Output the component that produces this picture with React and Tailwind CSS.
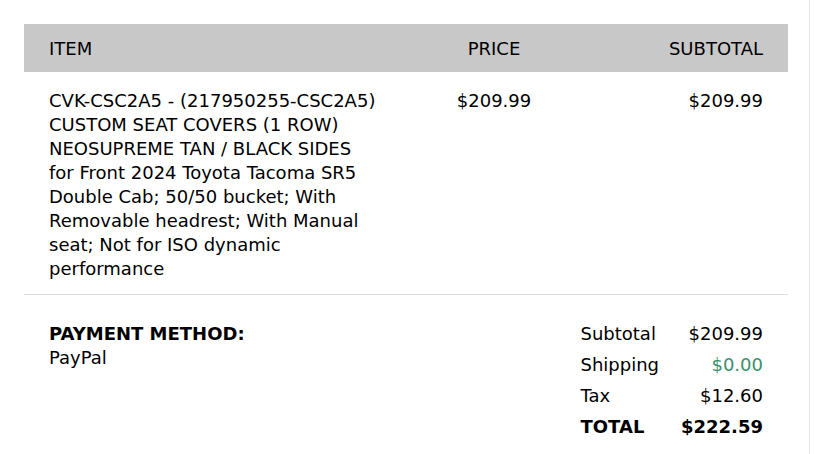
import React from 'react';

const itemLines = [
  'CVK-CSC2A5 - (217950255-CSC2A5)',
  'CUSTOM SEAT COVERS (1 ROW)',
  'NEOSUPREME TAN / BLACK SIDES',
  'for Front 2024 Toyota Tacoma SR5',
  'Double Cab; 50/50 bucket; With',
  'Removable headrest; With Manual',
  'seat; Not for ISO dynamic',
  'performance',
];

const totals = [
  { label: 'Subtotal', value: '$209.99' },
  { label: 'Shipping', value: '$0.00', green: true },
  { label: 'Tax', value: '$12.60' },
  { label: 'TOTAL', value: '$222.59', bold: true },
];

export default function App() {
  return (
    <div className="min-h-[454px] w-[815px] bg-white text-black text-[18px] leading-6 font-['DejaVu_Sans',Verdana,sans-serif]">
      <div className="w-[810px] min-h-[454px] border-r border-[#e6e6e6] pt-6 pl-6">
        <div className="w-[764px]">
          {/* Header */}
          <div className="flex items-center h-12 bg-[#c8c8c8] px-[25px] pt-px">
            <div className="flex-1">ITEM</div>
            <div className="w-[140px] text-center">PRICE</div>
            <div className="w-[199px] text-right">SUBTOTAL</div>
          </div>

          {/* Item row */}
          <div className="flex px-[25px] pt-[17px] pb-[13px] border-b border-[#dcdcdc]">
            <div className="flex-1">
              {itemLines.map((line) => (
                <div key={line} className="whitespace-nowrap">{line}</div>
              ))}
            </div>
            <div className="w-[140px] text-center">$209.99</div>
            <div className="w-[199px] text-right">$209.99</div>
          </div>

          {/* Payment + totals */}
          <div className="flex justify-between px-[25px] pt-[27px]">
            <div>
              <div className="font-bold">PAYMENT METHOD:</div>
              <div>PayPal</div>
            </div>
            <div className="grid grid-cols-[auto_auto] gap-x-[22px] gap-y-[7px]">
              {totals.map((t) => (
                <React.Fragment key={t.label}>
                  <div className={t.bold ? 'font-bold' : ''}>{t.label}</div>
                  <div className={`text-right ${t.bold ? 'font-bold' : ''} ${t.green ? 'text-[#3b8f6b]' : ''}`}>
                    {t.value}
                  </div>
                </React.Fragment>
              ))}
            </div>
          </div>
        </div>
      </div>
    </div>
  );
}
